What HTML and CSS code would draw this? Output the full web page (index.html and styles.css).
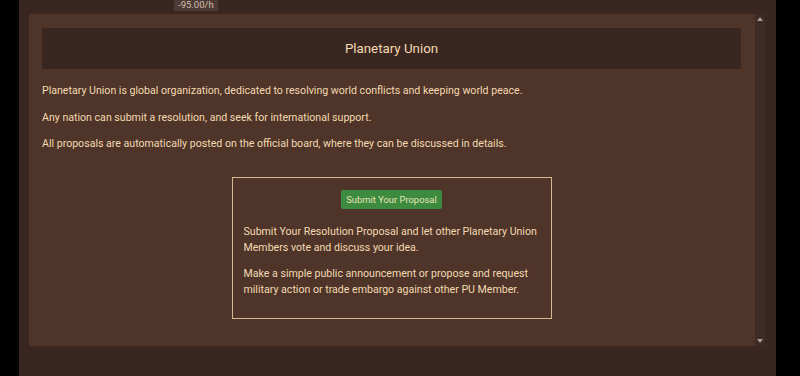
FILE: index.html
```html
<!DOCTYPE html>
<html lang="en">
<head>
  <meta charset="UTF-8">
  <meta name="viewport" content="width=device-width, initial-scale=1.0">
  <title>Planetary Union</title>
  <link rel="stylesheet" href="styles.css">
</head>
<body>
  <div class="page">
    <div class="rate-tip">-95.00/h</div>
    <div class="window">
      <div class="frame">
        <div class="title">Planetary Union</div>
        <p>Planetary Union is global organization, dedicated to resolving world conflicts and keeping world peace.</p>
        <p>Any nation can submit a resolution, and seek for international support.</p>
        <p>All proposals are automatically posted on the official board, where they can be discussed in details.</p>

        <div class="proposal">
          <div class="proposal-action">
            <button>Submit Your Proposal</button>
          </div>
          <p>Submit Your Resolution Proposal and let other Planetary Union Members vote and discuss your idea.</p>
          <p>Make a simple public announcement or propose and request military action or trade embargo against other PU Member.</p>
        </div>
      </div>
      <div class="scrollbar">
        <span class="arrow up"></span>
        <span class="arrow down"></span>
      </div>
    </div>
  </div>
</body>
</html>
```

FILE: styles.css
```css
body { margin: 0; background: #000; font-family: Roboto, "Liberation Sans", sans-serif; }
.page { position: relative; margin-left: 19px; width: 757px; height: 376px; background: #3a2620; padding: 14px 0 0 10px; box-sizing: border-box; }
.rate-tip { position: absolute; left: 155px; top: -2px; padding: 1px 4px 1px; background: #4b3a36; color: #d6bfa6; font-size: 9.5px; line-height: 11px; }
.window { display: flex; height: 332px; }
.frame { width: 726px; background: #4e3429; padding: 14px 14px 0 13px; box-sizing: border-box; color: #f3dab2; }
.title { height: 41px; line-height: 41px; background: #3a2620; text-align: center; font-size: 13.3px; margin-bottom: 14px; }
p { margin: 0 0 10px; font-size: 10.6px; line-height: 16px; }
.frame > p { margin-bottom: 10.5px; }
.proposal { width: 320px; box-sizing: border-box; margin: 25px auto 0; padding: 10px 11px 11px; border: 1px solid #d3b891; height: 142px; }
.proposal-action { text-align: center; margin-bottom: 15px; }
button { background: #3d8b3f; color: #e8e4b8; border: none; border-radius: 2px; font-family: inherit; font-size: 9.4px; height: 19px; padding: 0 5px; cursor: pointer; }
.scrollbar { width: 10px; background: #3f2b25; display: flex; flex-direction: column; justify-content: space-between; align-items: center; padding: 3px 0; box-sizing: border-box; }
.arrow { width: 0; height: 0; border-left: 3px solid transparent; border-right: 3px solid transparent; }
.arrow.up { border-bottom: 4px solid #a89a96; }
.arrow.down { border-top: 4px solid #a89a96; }
```
